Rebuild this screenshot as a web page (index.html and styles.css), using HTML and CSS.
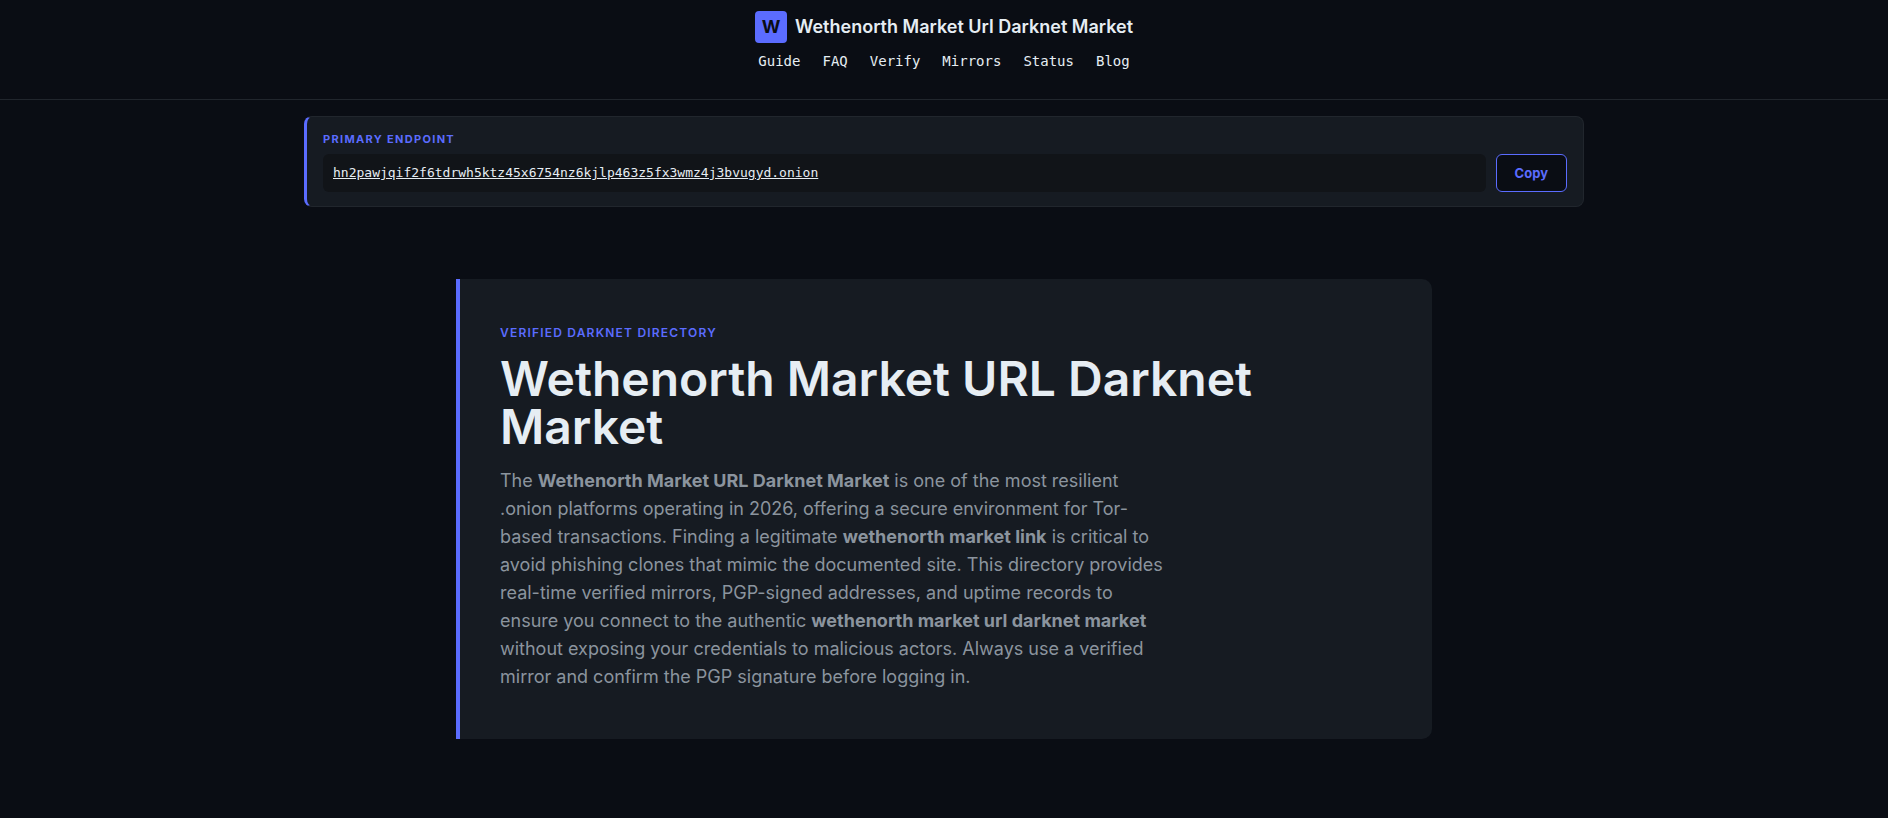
FILE: index.html
```html
<!DOCTYPE html>
<html lang="en">
<head>
    <meta charset="UTF-8">
    <meta name="viewport" content="width=device-width, initial-scale=1.0">
    <title>Wethenorth Market Url Darknet Market</title>
    <link rel="stylesheet" href="styles.css">
</head>
<body>
    <header class="site-header">
        <a class="brand" href="#">
            <span class="brand-logo">W</span>
            <span>Wethenorth Market Url Darknet Market</span>
        </a>
        <nav class="site-nav">
            <a href="#">Guide</a>
            <a href="#">FAQ</a>
            <a href="#">Verify</a>
            <a href="#">Mirrors</a>
            <a href="#">Status</a>
            <a href="#">Blog</a>
        </nav>
    </header>

    <section class="endpoint">
        <div class="endpoint-label">Primary Endpoint</div>
        <div class="endpoint-row">
            <div class="endpoint-url"><a href="#">hn2pawjqif2f6tdrwh5ktz45x6754nz6kjlp463z5fx3wmz4j3bvugyd.onion</a></div>
            <button class="copy-btn" type="button">Copy</button>
        </div>
    </section>

    <main class="hero">
        <div class="eyebrow">Verified Darknet Directory</div>
        <h1>Wethenorth Market URL Darknet Market</h1>
        <p>The <strong>Wethenorth Market URL Darknet Market</strong> is one of the most resilient .onion platforms operating in 2026, offering a secure environment for Tor-based transactions. Finding a legitimate <strong>wethenorth market link</strong> is critical to avoid phishing clones that mimic the documented site. This directory provides real-time verified mirrors, PGP-signed addresses, and uptime records to ensure you connect to the authentic <strong>wethenorth market url darknet market</strong> without exposing your credentials to malicious actors. Always use a verified mirror and confirm the PGP signature before logging in.</p>
    </main>
</body>
</html>
```
FILE: styles.css
```css
* {
    box-sizing: border-box;
}
body {
    margin: 0;
    background: #0a0d14;
    color: #e6edf3;
    font-family: Inter, sans-serif;
}
.site-header {
    display: flex;
    flex-direction: column;
    align-items: center;
    gap: 8px;
    padding: 11px 16px 28px;
    border-bottom: 1px solid #21262d;
}
.brand {
    display: flex;
    align-items: center;
    gap: 8px;
    color: #e6edf3;
    font-size: 18px;
    font-weight: 600;
    line-height: 32px;
    text-decoration: none;
}
.brand-logo {
    width: 32px;
    height: 32px;
    border-radius: 4px;
    background: #5b6cff;
    color: #0a0d14;
    font-weight: 700;
    text-align: center;
}
.site-nav {
    display: flex;
    flex-wrap: wrap;
    gap: 22px;
}
.site-nav a {
    color: #e6edf3;
    font-family: "DejaVu Sans Mono", monospace;
    font-size: 14px;
    line-height: 20px;
    text-decoration: none;
}
.endpoint {
    max-width: 1280px;
    margin: 16px auto 0;
    padding: 14px 16px;
    background: #161b22;
    border: 1px solid #21262d;
    border-left: 3px solid #5b6cff;
    border-radius: 8px;
}
.endpoint-label {
    margin-bottom: 6px;
    color: #5b6cff;
    font-size: 11px;
    font-weight: 700;
    line-height: 17px;
    letter-spacing: 0.12em;
    text-transform: uppercase;
}
.endpoint-row {
    display: flex;
    gap: 10px;
}
.endpoint-url {
    flex: 1;
    padding: 0 10px;
    background: #111418;
    border-radius: 6px;
    font-family: "DejaVu Sans Mono", monospace;
    font-size: 13px;
    line-height: 38px;
}
.endpoint-url a {
    color: #e6edf3;
}
.copy-btn {
    padding: 0 18px;
    background: #0a0d14;
    border: 1px solid #5b6cff;
    border-radius: 6px;
    color: #5b6cff;
    font-family: inherit;
    font-size: 13px;
    font-weight: 700;
    cursor: pointer;
}
.hero {
    max-width: 976px;
    margin: 72px auto;
    padding: 48px 40px;
    background: #161b22;
    border-left: 4px solid #5b6cff;
    border-radius: 0 10px 10px 0;
}
.eyebrow {
    margin-bottom: 16px;
    color: #5b6cff;
    font-size: 12px;
    font-weight: 600;
    line-height: 12px;
    letter-spacing: 0.1em;
    text-transform: uppercase;
}
.hero h1 {
    margin: 0 0 16px;
    font-size: 48px;
    font-weight: 600;
    line-height: 48px;
}
.hero p {
    max-width: 672px;
    margin: 0;
    color: #8b949e;
    font-size: 18px;
    line-height: 28px;
}
```
